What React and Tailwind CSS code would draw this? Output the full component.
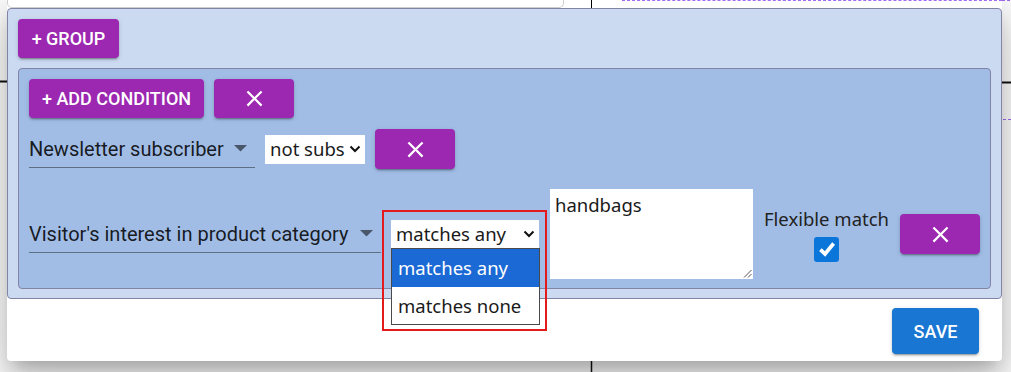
import React from 'react';

const btnShadow =
    'shadow-[0_3px_1px_-2px_rgba(0,0,0,0.2),0_2px_2px_0_rgba(0,0,0,0.14),0_1px_5px_0_rgba(0,0,0,0.12)]';

const CloseIcon = () => (
    <svg width="27" height="27" viewBox="0 0 24 24" fill="white">
        <path d="M19 6.41 17.59 5 12 10.59 6.41 5 5 6.41 10.59 12 5 17.59 6.41 19 12 13.41 17.59 19 19 17.59 13.41 12z" />
    </svg>
);

const Chevron = () => (
    <svg width="12" height="8" viewBox="0 0 12 8" className="shrink-0">
        <polyline points="1.5,1.5 6,6 10.5,1.5" fill="none" stroke="#111" strokeWidth="2" />
    </svg>
);

const PurpleBtn = ({ className, children }) => (
    <button
        type="button"
        className={`flex items-center justify-center rounded-[4px] bg-[#9c27b0] text-white text-[18px] font-medium ${btnShadow} ${className}`}
    >
        {children}
    </button>
);

const FieldSelect = ({ label, width }) => (
    <div className={`flex items-center justify-between h-[38px] pr-[8px] border-b border-[rgba(0,0,0,0.42)] ${width}`}>
        <span className="text-[20px] leading-none text-[rgba(0,0,0,0.87)] whitespace-nowrap">{label}</span>
        <svg width="13" height="7" viewBox="0 0 13 7">
            <path d="M0 0 L13 0 L6.5 6.5z" fill="rgba(0,0,0,0.54)" />
        </svg>
    </div>
);

const NativeSelect = ({ text, width }) => (
    <div className={`flex items-center justify-between bg-white pl-[5px] pr-[4px] font-['Noto_Sans',sans-serif] ${width}`}>
        <span className="whitespace-nowrap text-[18.5px] leading-none text-[#1a1a1a]">{text}</span>
        <Chevron />
    </div>
);

export default function App() {
    return (
        <div className="relative w-[1011px] h-[372px] overflow-hidden bg-white font-['Roboto',sans-serif]">
            {/* page behind the dialog */}
            <svg className="absolute inset-0" width="1011" height="372">
                <line x1="0" y1="81.5" x2="8" y2="81.5" stroke="#111" strokeWidth="2" />
                <line x1="1002" y1="82.5" x2="1011" y2="82.5" stroke="#111" strokeWidth="2" />
                <line x1="1003" y1="119.5" x2="1011" y2="119.5" stroke="#a36af5" strokeDasharray="3 2" />
                <line x1="1002" y1="0.5" x2="1011" y2="0.5" stroke="#a36af5" strokeDasharray="3 2" />
                <line x1="591.5" y1="360" x2="591.5" y2="372" stroke="#111" strokeWidth="1.5" />
            </svg>

            <div className="relative ml-[7px] w-[995px] h-[361px] flex flex-col bg-white rounded-b-[4px] shadow-[0_11px_15px_-7px_rgba(0,0,0,0.2),0_24px_38px_3px_rgba(0,0,0,0.14),0_9px_46px_8px_rgba(0,0,0,0.12)]">
                {/* strip of the content above */}
                <div className="flex h-[8px] shrink-0">
                    <div className="w-[557px] h-[8px] border-x border-b border-[#cfcfcf] rounded-b-[5px]" />
                    <div className="w-[27px]" />
                    <div className="w-[1px] bg-black" />
                    <div className="w-[30px]" />
                    <div className="flex-1 border-t border-dashed border-[#a36af5]" />
                </div>

                {/* outer group */}
                <div className="flex flex-col pt-[10px] px-[10px] pb-[9px] bg-[#cbdaf1] border border-[#8383a6] rounded-[4px]">
                    <PurpleBtn className="w-[101px] h-[39px]">+ GROUP</PurpleBtn>

                    {/* inner group */}
                    <div className="mt-[10px] flex flex-col pt-[10px] px-[10px] pb-[9px] bg-[#a1bde6] border border-[#8383a6] rounded-[4px]">
                        <div className="flex gap-[10px]">
                            <PurpleBtn className="w-[175px] h-[39px]">+ ADD CONDITION</PurpleBtn>
                            <PurpleBtn className="w-[80px] h-[39px]">
                                <CloseIcon />
                            </PurpleBtn>
                        </div>

                        <div className="mt-[11px] flex items-center h-[40px]">
                            <FieldSelect label="Newsletter subscriber" width="w-[226px]" />
                            <div className="ml-[10px]">
                                <NativeSelect text="not subs" width="w-[100px] h-[29px]" />
                            </div>
                            <PurpleBtn className="ml-[10px] w-[80px] h-[40px]">
                                <CloseIcon />
                            </PurpleBtn>
                        </div>

                        <div className="mt-[20px] flex items-center h-[90px]">
                            <FieldSelect label="Visitor's interest in product category" width="w-[352px]" />

                            <div className="relative ml-[10px]">
                                <NativeSelect text="matches any" width="w-[148px] h-[28px]" />
                                {/* open option list */}
                                <div className="absolute left-0 top-[28px] z-10 w-[149px] flex flex-col bg-white border border-[#4a4a4a] font-['Noto_Sans',sans-serif] text-[18.5px]">
                                    <div className="h-[38px] flex items-center pl-[6px] bg-[#1a69d4] text-white">matches any</div>
                                    <div className="h-[37px] flex items-center pl-[6px] text-[#1a1a1a]">matches none</div>
                                </div>
                                {/* red highlight frame */}
                                <div className="absolute left-[-9px] top-[-10px] z-20 w-[165px] h-[121px] border-2 border-[#e3191c]" />
                            </div>

                            <div className="relative ml-[11px] w-[203px] h-[90px] bg-white pl-[5px] pt-[4px] font-['Noto_Sans',sans-serif] text-[18.5px] leading-[24px] text-[#1a1a1a]">
                                handbags
                                <svg className="absolute right-[1px] bottom-[1px]" width="9" height="9" viewBox="0 0 9 9">
                                    <line x1="1" y1="8.5" x2="8.5" y2="1" stroke="#555" strokeWidth="1" />
                                    <line x1="5" y1="8.5" x2="8.5" y2="5" stroke="#555" strokeWidth="1" />
                                </svg>
                            </div>

                            <div className="ml-[11px] w-[125px] flex flex-col items-center font-['Noto_Sans',sans-serif]">
                                <span className="text-[18.5px] leading-[24px] text-[#222] whitespace-nowrap">Flexible match</span>
                                <div className="mt-[6px] w-[25px] h-[25px] shrink-0 rounded-[3px] bg-[#0b76d9] flex items-center justify-center">
                                    <svg width="22" height="22" viewBox="0 0 20 20">
                                        <path d="M4 10.5 L8.2 14.5 L16 5" fill="none" stroke="white" strokeWidth="3.4" />
                                    </svg>
                                </div>
                            </div>

                            <PurpleBtn className="ml-[11px] w-[80px] h-[40px]">
                                <CloseIcon />
                            </PurpleBtn>
                        </div>
                    </div>
                </div>

                <div className="flex justify-end pt-[9px] pr-[23px]">
                    <button
                        type="button"
                        className={`w-[87px] h-[46px] rounded-[4px] bg-[#1976d2] text-white text-[18px] font-medium ${btnShadow}`}
                    >
                        SAVE
                    </button>
                </div>
            </div>
        </div>
    );
}
